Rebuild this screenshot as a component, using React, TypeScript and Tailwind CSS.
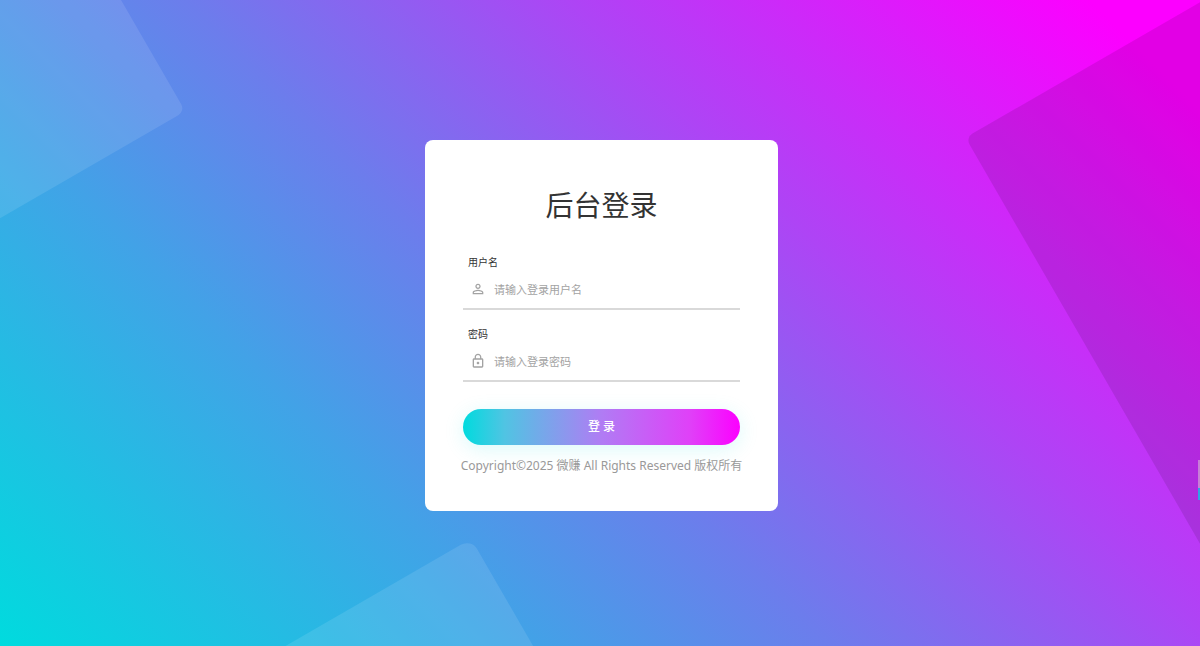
import { useState } from "react";
import type { FormEvent, ReactNode } from "react";
import { MdLockOutline, MdPersonOutline } from "react-icons/md";

type FieldProps = {
  id: string;
  label: string;
  type: string;
  placeholder: string;
  icon: ReactNode;
  value: string;
  onChange: (value: string) => void;
};

function Field({ id, label, type, placeholder, icon, value, onChange }: FieldProps) {
  return (
    <div>
      <label htmlFor={id} className="block pl-[5px] text-[10px] leading-4 text-[#333333]">
        {label}
      </label>
      <div className="flex h-10 items-center border-b-2 border-[#d9d9d9] pl-[7px] text-[#a3a3a3] focus-within:border-[#a64bf4]">
        {icon}
        <input
          id={id}
          name={id}
          type={type}
          placeholder={placeholder}
          value={value}
          onChange={(e) => onChange(e.target.value)}
          className="ml-2 h-full min-w-0 flex-1 bg-transparent text-[11px] text-[#333333] outline-none placeholder:text-[#a3a3a3]"
        />
      </div>
    </div>
  );
}

export default function App() {
  const [username, setUsername] = useState("");
  const [password, setPassword] = useState("");

  const handleSubmit = (e: FormEvent) => {
    e.preventDefault();
  };

  return (
    <div className="relative flex min-h-screen items-center justify-center overflow-hidden bg-[linear-gradient(45deg,#00dbde,#42a2e7_29%,#6c7dec_45%,#ae44f5_66%,#fc00ff_94%)] pt-[5px] pl-[3px] font-['Noto_Sans','Noto_Sans_CJK_SC',sans-serif]">
      {/* Background squares */}
      <div className="absolute top-[-162px] left-[-288px] size-[400px] -rotate-30 rounded-lg bg-white/10" />
      <div className="absolute top-[-14px] right-[-331px] size-[478px] -rotate-30 rounded-lg bg-black/10" />
      <div className="absolute bottom-[-366px] left-[198px] size-[400px] -rotate-30 rounded-xl bg-white/10" />

      {/* Login card */}
      <form
        onSubmit={handleSubmit}
        className="relative w-full max-w-[353px] rounded-lg bg-white px-[38px] pt-[47px] pb-9"
      >
        <h1 className="mb-[31px] text-center text-[28px] leading-9 font-normal text-[#333333]">后台登录</h1>

        <div className="flex flex-col gap-4">
          <Field
            id="username"
            label="用户名"
            type="text"
            placeholder="请输入登录用户名"
            icon={<MdPersonOutline className="size-4" />}
            value={username}
            onChange={setUsername}
          />
          <Field
            id="password"
            label="密码"
            type="password"
            placeholder="请输入登录密码"
            icon={<MdLockOutline className="size-4" />}
            value={password}
            onChange={setPassword}
          />
        </div>

        <button
          type="submit"
          className="mt-[27px] block h-9 w-full cursor-pointer rounded-full bg-[linear-gradient(90deg,#00dbde,#50c4e3_15%,#b07cf4_50%,#e040f8_82%,#fc00ff)] text-[12px] font-medium text-white shadow-[0_4px_20px_rgba(0,219,222,0.15)]"
        >
          登 录
        </button>

        <p className="mt-3 flex justify-center text-[12px] leading-[18px] whitespace-nowrap text-[#999999]">
          Copyright©2025 微赚 All Rights Reserved 版权所有
        </p>
      </form>

      {/* Side handle */}
      <div className="absolute top-[460px] right-0 h-10 w-0.5 bg-[linear-gradient(#c77fd6_70%,#2fa4e4_70%)]" />
    </div>
  );
}
